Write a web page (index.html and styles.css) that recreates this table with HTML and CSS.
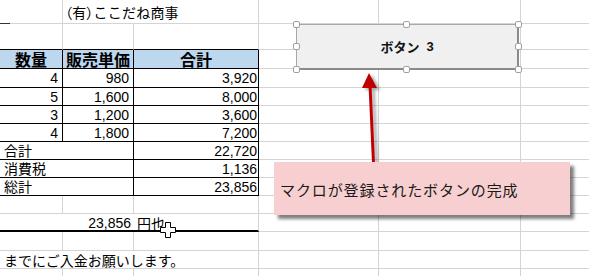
FILE: index.html
```html
<!DOCTYPE html>
<html lang="ja">
<head>
<meta charset="utf-8">
<link rel="stylesheet" href="styles.css">
</head>
<body>
<div class="sheet">
  <!-- row 0 -->
  <div class="c mark"></div>
  <div class="c span2 title"><span class="palt">（</span>有<span class="palt">）</span>ここだね商事</div>
  <div class="c"></div><div class="c"></div><div class="c"></div>
  <!-- row 1 -->
  <div class="c tb"></div><div class="c tb"></div><div class="c tb"></div>
  <div class="c"></div><div class="c"></div><div class="c"></div>
  <!-- row 2 header -->
  <div class="c t h">数量</div><div class="c t h">販売単価</div><div class="c t h">合計</div>
  <div class="c"></div><div class="c"></div><div class="c"></div>
  <!-- data rows -->
  <div class="c t num n0">4</div><div class="c t num n1">980</div><div class="c t num n2">3,920</div>
  <div class="c"></div><div class="c"></div><div class="c"></div>
  <div class="c t num n0">5</div><div class="c t num n1">1,600</div><div class="c t num n2">8,000</div>
  <div class="c"></div><div class="c"></div><div class="c"></div>
  <div class="c t num n0">3</div><div class="c t num n1">1,200</div><div class="c t num n2">3,600</div>
  <div class="c"></div><div class="c"></div><div class="c"></div>
  <div class="c t num n0">4</div><div class="c t num n1">1,800</div><div class="c t num n2">7,200</div>
  <div class="c"></div><div class="c"></div><div class="c"></div>
  <!-- totals -->
  <div class="c t span2 label">合計</div><div class="c t num n2">22,720</div>
  <div class="c"></div><div class="c"></div><div class="c"></div>
  <div class="c t span2 label">消費税</div><div class="c t num n2">1,136</div>
  <div class="c"></div><div class="c"></div><div class="c"></div>
  <div class="c t span2 label">総計</div><div class="c t num n2">23,856</div>
  <div class="c"></div><div class="c"></div><div class="c"></div>
  <!-- row 10 -->
  <div class="c"></div><div class="c"></div><div class="c"></div>
  <div class="c"></div><div class="c"></div><div class="c"></div>
  <!-- row 11 amount -->
  <div class="c span3 thick amount"><span class="amt-num">23,856</span><span class="amt-unit">円也</span></div>
  <div class="c"></div><div class="c"></div><div class="c"></div>
  <!-- row 12 -->
  <div class="c"></div><div class="c"></div><div class="c"></div>
  <div class="c"></div><div class="c"></div><div class="c"></div>
  <!-- row 13 -->
  <div class="c span3 note">までにご入金お願いします。</div>
  <div class="c"></div><div class="c"></div><div class="c"></div>
  <!-- row 14 -->
  <div class="c"></div><div class="c"></div><div class="c"></div>
  <div class="c"></div><div class="c"></div><div class="c"></div>

  <!-- overlays -->
  <div class="button"><span>ボタン</span><span class="btn-num">3</span>
    <span class="hd h1"></span><span class="hd h2"></span><span class="hd h3"></span>
    <span class="hd h4"></span><span class="hd h5"></span>
    <span class="hd h6"></span><span class="hd h7"></span><span class="hd h8"></span>
  </div>

  <svg class="arrow" width="30" height="100" viewBox="355 70 30 100">
    <line x1="373.5" y1="163" x2="370" y2="85" stroke="#c00000" stroke-width="3"/>
    <polygon points="369,73 377,88 362,88" fill="#c00000"/>
  </svg>

  <div class="callout">マクロが登録されたボタンの完成</div>

  <svg class="cursor" width="16" height="16" viewBox="0 0 16 16">
    <polygon points="5.5,0.5 10.5,0.5 10.5,5.5 15.5,5.5 15.5,10.5 10.5,10.5 10.5,15.5 5.5,15.5 5.5,10.5 0.5,10.5 0.5,5.5 5.5,5.5" fill="#fff" stroke="#000" stroke-width="1"/>
  </svg>
</div>
</body>
</html>
```
FILE: styles.css
```css
* { box-sizing: border-box; }
html, body { margin: 0; padding: 0; background: #fff; }
body {
  font-family: "Liberation Sans", "Noto Sans CJK JP", sans-serif;
  color: #000;
  font-size: 14px;
  overflow: hidden;
}
.sheet {
  position: relative;
  display: grid;
  grid-template-columns: 63px 71px 125px 120px 142px 80px;
  grid-template-rows: 24px 26px 19px 19px 18px 18px 18px 18px 18px 18px 18px 18px 19px 18px 18px;
  width: 589px;
  height: 276px;
  overflow: hidden;
}
.c {
  border-right: 1px solid #d4d4d4;
  border-bottom: 1px solid #d4d4d4;
  white-space: nowrap;
  line-height: 17px;
  position: relative;
}
.span2 { grid-column: span 2; }
.span3 { grid-column: span 3; }
.mark::after {
  content: "";
  position: absolute;
  left: 0; bottom: -1px;
  width: 10px; height: 1px;
  background: #333;
}
.title {
  font-family: "Noto Sans CJK JP", sans-serif;
  font-size: 14px;
  padding-left: 2px;
  line-height: 24px;
  letter-spacing: 0.2px;
}
.palt { font-feature-settings: "palt"; }
.tb { border-bottom-color: #000; }
.t { border-right-color: #000; border-bottom-color: #000; }
.h {
  background: #bdd7ee;
  font-family: "Noto Sans CJK JP", sans-serif;
  font-weight: 700;
  font-size: 16px;
  line-height: 18px;
  text-align: center;
}
.num { text-align: right; line-height: 18px; }
.n0, .n1 { padding-right: 4px; }
.n2 { padding-right: 1px; }
.label {
  font-family: "Noto Sans CJK JP", sans-serif;
  padding-left: 4px;
  line-height: 17px;
}
.thick { border-bottom: 2px solid #000; }
.amount {
  display: grid;
  grid-template-columns: 134px 1fr;
  line-height: 18px;
}
.amt-num { text-align: right; padding-right: 3px; }
.amt-unit { font-family: "Noto Sans CJK JP", sans-serif; padding-left: 3px; }
.note {
  font-family: "Noto Sans CJK JP", sans-serif;
  padding-left: 4px;
  line-height: 18px;
}

.button {
  position: absolute;
  left: 296px; top: 24px;
  width: 223px; height: 46px;
  background: #f0f0f0;
  border: 1px solid #a8a8a8;
  border-right: 2px solid #8a8a8a;
  border-bottom: 2px solid #8a8a8a;
  font-family: "Noto Sans CJK JP", sans-serif;
  font-weight: 700;
  font-size: 13px;
  color: #111;
  display: flex;
  align-items: center;
  justify-content: center;
}
.btn-num { margin-left: 7px; font-family: "Liberation Sans", sans-serif; }
.hd {
  position: absolute;
  width: 7px; height: 7px;
  background: #fff;
  border: 1px solid #a0a0a0;
  border-radius: 2px;
}
.h1 { left: -4px; top: -4px; }
.h2 { left: calc(50% - 4px); top: -4px; }
.h3 { right: -5px; top: -4px; }
.h4 { left: -4px; top: calc(50% - 4px); }
.h5 { right: -5px; top: calc(50% - 4px); }
.h6 { left: -4px; bottom: -5px; }
.h7 { left: calc(50% - 4px); bottom: -5px; }
.h8 { right: -5px; bottom: -5px; }

.arrow {
  position: absolute;
  left: 355px; top: 70px;
  filter: drop-shadow(3px 2px 1.5px rgba(0,0,0,0.35));
}
.callout {
  position: absolute;
  left: 274px; top: 162px;
  width: 296px; height: 53px;
  background: #f8cfd1;
  box-shadow: 4px 4px 3px rgba(0,0,0,0.5);
  font-family: "Noto Sans CJK JP", sans-serif;
  font-size: 15px;
  letter-spacing: 0.9px;
  color: #1a1a1a;
  padding-left: 6px;
  display: flex;
  align-items: center;
  padding-top: 2px;
}
.cursor {
  position: absolute;
  left: 160px; top: 222px;
}
```
